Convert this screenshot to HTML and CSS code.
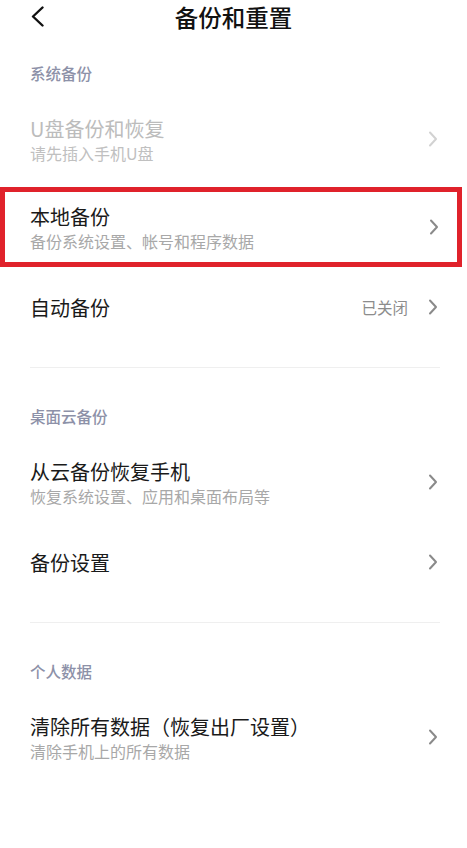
FILE: index.html
```html
<!DOCTYPE html>
<html lang="zh-CN">
<head>
<meta charset="utf-8">
<title>备份和重置</title>
<link rel="stylesheet" href="styles.css">
</head>
<body>
<div class="page">
  <header class="header">
    <svg class="back" width="14" height="22" viewBox="0 0 14 22"><polyline points="11.5,1.5 2,10.5 11.5,19.5" fill="none" stroke="#111" stroke-width="2.4" stroke-linecap="round" stroke-linejoin="round"/></svg>
    <h1 class="title">备份和重置</h1>
  </header>

  <section class="section">
    <div class="label first">系统备份</div>
    <div class="item disabled">
      <div class="text">
        <div class="name">U盘备份和恢复</div>
        <div class="desc">请先插入手机U盘</div>
      </div>
      <svg class="chev" width="10" height="16" viewBox="0 0 10 16"><polyline points="2,1.5 8,8 2,14.5" fill="none" stroke="currentColor" stroke-width="2" stroke-linecap="round" stroke-linejoin="round"/></svg>
    </div>
    <div class="item highlight">
      <div class="text">
        <div class="name">本地备份</div>
        <div class="desc">备份系统设置、帐号和程序数据</div>
      </div>
      <svg class="chev" width="10" height="16" viewBox="0 0 10 16"><polyline points="2,1.5 8,8 2,14.5" fill="none" stroke="currentColor" stroke-width="2" stroke-linecap="round" stroke-linejoin="round"/></svg>
    </div>
    <div class="item">
      <div class="text">
        <div class="name">自动备份</div>
      </div>
      <span class="value">已关闭</span>
      <svg class="chev" width="10" height="16" viewBox="0 0 10 16"><polyline points="2,1.5 8,8 2,14.5" fill="none" stroke="currentColor" stroke-width="2" stroke-linecap="round" stroke-linejoin="round"/></svg>
    </div>
    <div class="divider"></div>
  </section>

  <section class="section">
    <div class="label">桌面云备份</div>
    <div class="item">
      <div class="text">
        <div class="name">从云备份恢复手机</div>
        <div class="desc">恢复系统设置、应用和桌面布局等</div>
      </div>
      <svg class="chev" width="10" height="16" viewBox="0 0 10 16"><polyline points="2,1.5 8,8 2,14.5" fill="none" stroke="currentColor" stroke-width="2" stroke-linecap="round" stroke-linejoin="round"/></svg>
    </div>
    <div class="item">
      <div class="text">
        <div class="name">备份设置</div>
      </div>
      <svg class="chev" width="10" height="16" viewBox="0 0 10 16"><polyline points="2,1.5 8,8 2,14.5" fill="none" stroke="currentColor" stroke-width="2" stroke-linecap="round" stroke-linejoin="round"/></svg>
    </div>
    <div class="divider"></div>
  </section>

  <section class="section">
    <div class="label">个人数据</div>
    <div class="item">
      <div class="text">
        <div class="name">清除所有数据（恢复出厂设置）</div>
        <div class="desc">清除手机上的所有数据</div>
      </div>
      <svg class="chev" width="10" height="16" viewBox="0 0 10 16"><polyline points="2,1.5 8,8 2,14.5" fill="none" stroke="currentColor" stroke-width="2" stroke-linecap="round" stroke-linejoin="round"/></svg>
    </div>
  </section>
</div>
</body>
</html>
```
FILE: styles.css
```css
html, body {
  margin: 0;
  padding: 0;
  background: #ffffff;
}
body {
  font-family: "Noto Sans CJK SC", "Noto Sans", sans-serif;
  color: #1a1a1a;
  width: 467px;
  height: 848px;
  overflow: hidden;
}
.page {
  display: flex;
  flex-direction: column;
}
.header {
  height: 34px;
  position: relative;
  display: flex;
  align-items: center;
  justify-content: center;
}
.back {
  position: absolute;
  left: 31px;
  top: 6px;
}
.title {
  margin: 0;
  font-size: 23.5px;
  font-weight: 500;
  line-height: 34px;
  color: #111;
}
.section {
  display: flex;
  flex-direction: column;
}
.label {
  font-size: 15.5px;
  font-weight: 500;
  line-height: 20px;
  color: #8d91a8;
  padding: 38px 30px 16px;
}
.label.first {
  padding-top: 29px;
}
.item {
  height: 80px;
  box-sizing: border-box;
  display: flex;
  align-items: center;
  padding: 0 29px 0 30px;
  color: #8a8a8a;
}
.item.disabled {
  color: #d2d2d2;
  margin-bottom: 8px;
}
.item.disabled .name {
  color: #bcbcbc;
}
.item.disabled .desc {
  color: #c0c0c0;
}
.item.highlight {
  border: 5px solid #e0222b;
  width: 462px;
  padding: 0 18px 0 25px;
}
.text {
  flex: 1;
  padding-top: 2px;
}
.name {
  font-size: 20px;
  line-height: 26px;
  color: #1a1a1a;
}
.desc {
  font-size: 16px;
  line-height: 22px;
  color: #a8a8a8;
}
.value {
  font-size: 15.5px;
  color: #8c8c8c;
  margin-right: 20px;
}
.chev {
  display: block;
  flex: none;
}
.divider {
  height: 1px;
  background: #efefef;
  margin: 20px 27px 0 30px;
}
```
